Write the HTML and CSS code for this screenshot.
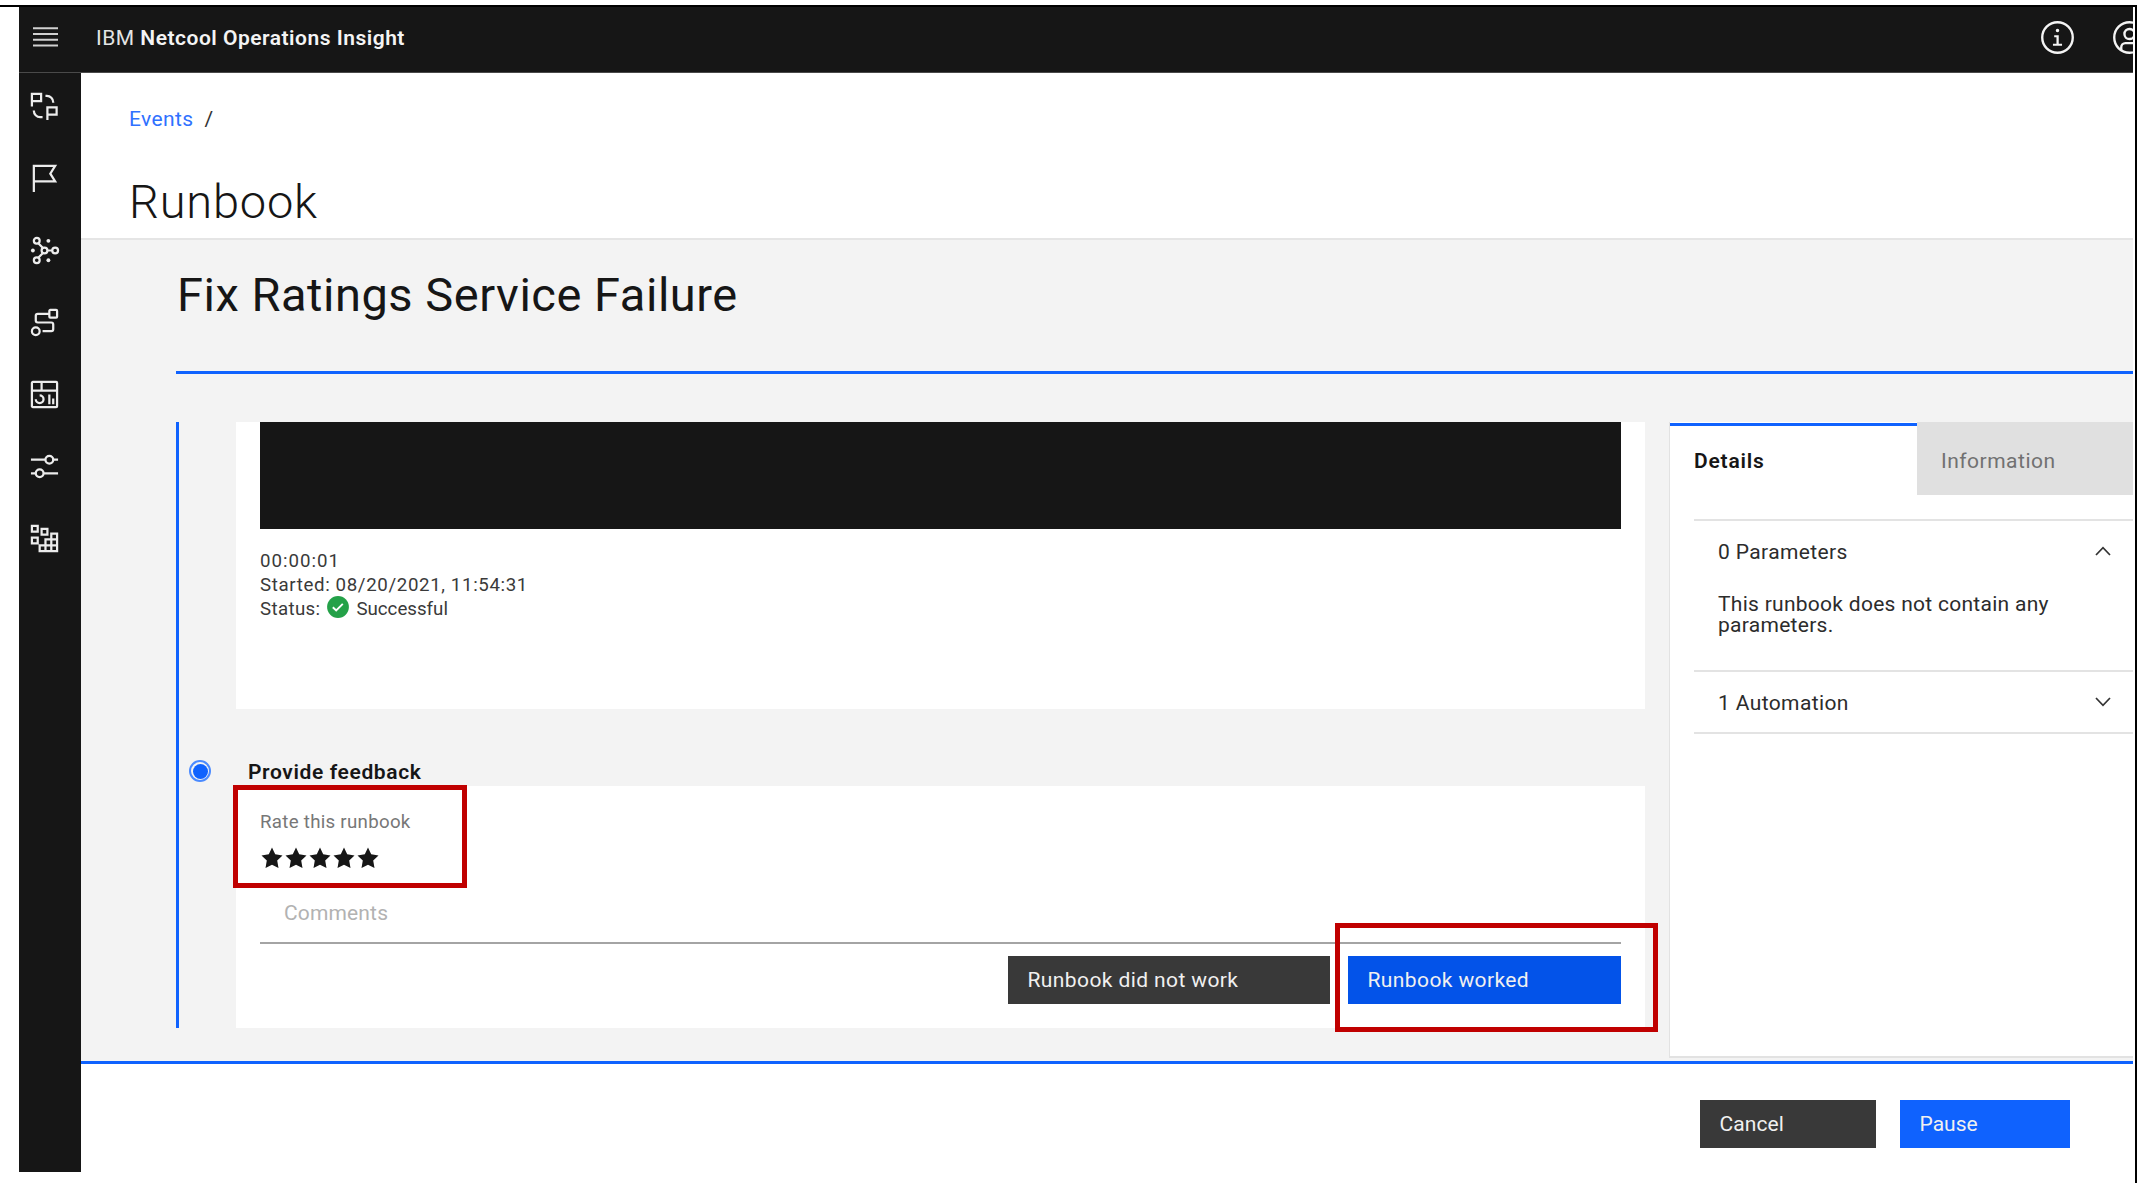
FILE: index.html
```html
<!DOCTYPE html>
<html lang="en">
<head>
<meta charset="utf-8">
<title>IBM Netcool Operations Insight - Runbook</title>
<link rel="stylesheet" href="styles.css">
</head>
<body>
<div class="frame">
<div class="app">
  <header class="topbar">
    <svg class="icon-menu" viewBox="0 0 25 20" fill="none" stroke="currentColor" stroke-width="2"><path d="M0 1.3h25M0 7h25M0 12.7h25M0 18.4h25"/></svg>
    <div class="product">IBM <b>Netcool Operations Insight</b></div>
    <div class="actions">
      <svg class="icon-top" viewBox="0 0 32 32"><circle cx="16" cy="16" r="14.8" fill="none" stroke="currentColor" stroke-width="2.3"/><path fill="currentColor" d="M17.200 22v-8.200h-4.400v2h2.200v6.200h-3.400v2h8.800v-2zM16 7.400a1.700 1.700 0 1 0 0 3.400 1.700 1.700 0 0 0 0-3.400z"/></svg>
      <svg class="icon-top" viewBox="0 0 32 32" fill="none" stroke="currentColor" stroke-width="2.3"><circle cx="16" cy="16" r="14.8"/><circle cx="16" cy="12.6" r="4.9"/><path d="M8 28v-2.600a4 4 0 0 1 4-4h8a4 4 0 0 1 4 4V28"/></svg>
    </div>
  </header>
  <div class="body">
    <nav class="rail">
      <svg viewBox="0 0 32 32"><path d="M3 16V3h9.500v7.500H3M19 30V17h9.500v7.500H19M17 5h1.500A6.500 6.500 0 0 1 25 11.500v.5M5 20v.5A6.500 6.500 0 0 0 11.500 27H14"/></svg>
      <svg viewBox="0 0 32 32"><path d="M5 30V3h22l-5 8 5 8H5"/></svg>
      <svg viewBox="0 0 32 32"><circle cx="8" cy="6" r="3"/><circle cx="8" cy="26" r="3"/><circle cx="27" cy="16" r="3"/><circle cx="16" cy="16" r="3"/><path d="M19 16h5M9.600 8.500l4.800 5M9.600 23.500l4.800-5"/><g class="dots"><circle cx="4" cy="16" r="2"/><circle cx="20" cy="6" r="2"/><circle cx="20" cy="26" r="2"/></g></svg>
      <svg viewBox="0 0 32 32"><rect x="21" y="3" width="8" height="8" rx="1"/><circle cx="7" cy="25" r="4"/><path d="M21 7H9a2 2 0 0 0-2 2v5a2 2 0 0 0 2 2h14a2 2 0 0 1 2 2v5a2 2 0 0 1-2 2h-9"/></svg>
      <svg viewBox="0 0 32 32"><rect x="3" y="3" width="26" height="26" rx="1"/><path d="M3 12h26M13 3v9M11 17a4 4 0 1 1-4 4M21 16v10M25 20v6"/></svg>
      <svg viewBox="0 0 32 32"><path d="M2 9h15M25 9h5M2 23h5M15 23h15"/><circle cx="21" cy="9" r="4"/><circle cx="11" cy="23" r="4"/></svg>
      <svg viewBox="0 0 32 32"><path d="M3 3h6v6H3zM13 6h6v6h-6zM3 15h6v6H3zM23 11h6v18H11v-6h6v-6h6zM17 23v6M23 17v12M23 17h6M17 23h12"/></svg>
    </nav>
    <main class="main">
      <div class="page-head">
        <div class="crumbs"><a>Events</a><span>/</span></div>
        <h1>Runbook</h1>
      </div>
      <section class="runbook">
        <h2>Fix Ratings Service Failure</h2>
        <div class="columns">
          <div class="steps">
            <div class="card result">
              <div class="console"></div>
              <div class="meta">
                <div class="time">00:00:01</div>
                <div class="started">Started: 08/20/2021, 11:54:31</div>
                <div class="status">Status: <svg viewBox="0 0 22 22"><circle cx="11" cy="11" r="10.900" fill="#24a148"/><path d="M5.800 11.200l3.400 3.300 6.600-6.700" fill="none" stroke="#fff" stroke-width="1.900"/></svg><span>Successful</span></div>
              </div>
            </div>
            <div class="step-head"><i class="radio"></i><h3>Provide feedback</h3></div>
            <div class="card feedback">
              <div class="rate">Rate this runbook</div>
              <div class="stars">
                <svg viewBox="0 0 24 24"><path d="M12 1.500l3.200 6.800 7.300 1.100-5.300 5.100 1.300 7.500L12 18.800 5.500 22l1.300-7.500L1.500 9.400l7.300-1.100z"/></svg>
                <svg viewBox="0 0 24 24"><path d="M12 1.500l3.200 6.800 7.300 1.100-5.300 5.100 1.300 7.500L12 18.800 5.500 22l1.300-7.500L1.500 9.400l7.300-1.100z"/></svg>
                <svg viewBox="0 0 24 24"><path d="M12 1.500l3.200 6.800 7.300 1.100-5.300 5.100 1.300 7.500L12 18.800 5.500 22l1.300-7.500L1.500 9.400l7.300-1.100z"/></svg>
                <svg viewBox="0 0 24 24"><path d="M12 1.500l3.200 6.800 7.300 1.100-5.300 5.100 1.300 7.500L12 18.800 5.500 22l1.300-7.500L1.500 9.400l7.300-1.100z"/></svg>
                <svg viewBox="0 0 24 24"><path d="M12 1.500l3.200 6.800 7.300 1.100-5.300 5.100 1.300 7.500L12 18.800 5.500 22l1.300-7.500L1.500 9.400l7.300-1.100z"/></svg>
              </div>
              <div class="comments">Comments</div>
              <div class="verdict">
                <button class="btn dark">Runbook did not work</button>
                <button class="btn pressed">Runbook worked</button>
              </div>
              <div class="mark mark-rate"></div>
              <div class="mark mark-worked"></div>
            </div>
          </div>
          <aside class="side">
            <div class="tabs"><div class="tab on">Details</div><div class="tab">Information</div></div>
            <div class="acc">
              <div class="acc-item open">
                <div class="acc-head"><span>0 Parameters</span><svg viewBox="0 0 16 10"><path d="M1 9l7-7.300L15 9"/></svg></div>
                <p>This runbook does not contain any<br>parameters.</p>
              </div>
              <div class="acc-item">
                <div class="acc-head"><span>1 Automation</span><svg viewBox="0 0 16 10"><path d="M1 1l7 7.300L15 1"/></svg></div>
              </div>
            </div>
          </aside>
        </div>
      </section>
      <footer class="foot">
        <button class="btn dark cancel">Cancel</button>
        <button class="btn blue pause">Pause</button>
      </footer>
    </main>
  </div>
</div>
</div>
</body>
</html>
```
FILE: styles.css
```css
* { box-sizing: border-box; }
body {
  margin: 0;
  width: 2156px;
  height: 1183px;
  overflow: hidden;
  padding-top: 5px;
  background: #fff;
  color: #161616;
  font: 400 21px/24px Roboto, "Noto Sans", sans-serif;
  letter-spacing: .32px;
}
svg { display: block; flex: none; }
h1, h2, h3, p { margin: 0; }

.frame {
  width: 2137px;
  height: 1178px;
  padding: 0 2px 0 19px;
  border: solid #000;
  border-width: 2px 2px 0 0;
}
.app { height: 1165px; overflow: hidden; display: flex; flex-direction: column; }

.topbar {
  flex: none;
  height: 66px;
  display: flex;
  align-items: center;
  padding: 0 0 5px 14px;
  background: #161616;
  border-bottom: 1px solid #4a4a4a;
  color: #f4f4f4;
}
.icon-menu { width: 25px; height: 20px; color: #d0d0d0; }
.product { margin-left: 38px; padding-top: 1px; white-space: pre; letter-spacing: .5px; color: #e4e4e4; }
.product b { font-weight: 600; color: #f4f4f4; }
.actions { margin-left: auto; margin-right: -13px; display: flex; gap: 39px; }
.icon-top { width: 33px; height: 33px; }

.body { flex: 1; display: flex; min-height: 0; }
.rail {
  flex: none;
  width: 62px;
  background: #161616;
  padding: 18px 0 0 10px;
  display: flex;
  flex-direction: column;
  gap: 41px;
}
.rail svg { width: 31px; height: 31px; fill: none; stroke: #ececec; stroke-width: 2.300; }
.rail .dots { fill: #ececec; stroke: none; }

.main { flex: 1; min-width: 0; display: flex; flex-direction: column; }
.page-head { flex: none; height: 167px; padding: 34px 0 0 48px; border-bottom: 2px solid #e5e5e5; }
.crumbs { display: flex; gap: 11px; color: #333; line-height: 24px; }
.crumbs a { color: #2f71ff; letter-spacing: .4px; }
.page-head h1 { margin-top: 43px; font-size: 47px; line-height: 56px; font-weight: 300; letter-spacing: .8px; }

.runbook { flex: none; height: 821px; padding: 27px 0 0 95px; background: #f3f3f3; }
.runbook h2 {
  height: 107px;
  padding: 0 0 0 1px;
  font-size: 47px;
  line-height: 56px;
  font-weight: 400;
  letter-spacing: .53px;
  border-bottom: 3px solid #0f62fe;
}
.columns { display: flex; margin-top: 48px; }
.steps { flex: none; width: 1469px; height: 606px; border-left: 3px solid #0f62fe; }
.card { margin-left: 57px; background: #fff; }
.result { height: 287px; padding: 0 24px; }
.console { height: 107px; background: #161616; }
.meta { padding-top: 20px; font-size: 18.700px; line-height: 24px; color: #3a3a3a; }
.time { letter-spacing: 1px; }
.started { letter-spacing: .63px; }
.status { display: flex; letter-spacing: .35px; }
.status svg { width: 22px; height: 22px; margin: -1px 7px 0 7px; }
.status span { letter-spacing: 0; }
.step-head { display: flex; height: 77px; padding: 51px 0 0 10px; }
.radio { width: 22px; height: 22px; border: 2px solid #4a8aff; border-radius: 50%; background: #0f62fe; background-clip: content-box; padding: 1.500px; }
.step-head h3 { margin: 0 0 0 37px; font-size: 21px; line-height: 24px; font-weight: 600; letter-spacing: .62px; }

.feedback { position: relative; height: 242px; padding: 24px 24px 0; }
.rate { font-size: 18.700px; color: #777; letter-spacing: .28px; }
.stars { display: flex; margin: 12px 0 0; }
.stars svg { width: 24px; height: 24px; fill: #161616; }
.comments { margin-top: 14px; height: 60px; padding: 17px 0 0 24px; color: #b2b2b2; letter-spacing: .15px; border-bottom: 2px solid #a4a4a4; }
.verdict { display: flex; justify-content: flex-end; gap: 18px; margin-top: 12px; }
.btn { height: 48px; border: 0; padding: 0 0 0 19.500px; text-align: left; font: inherit; letter-spacing: .4px; color: #f0f0f0; }
.dark { width: 322px; background: #393939; }
.pressed { width: 273px; background: #0353e9; }
.blue { background: #0f62fe; }
.mark { position: absolute; border: 5px solid #c00000; }
.mark-rate { left: -3px; top: -1px; width: 234px; height: 103px; }
.mark-worked { right: -13px; top: 137px; width: 323px; height: 109px; }

.side { flex: 1; margin: 0 0 0 24px; height: 635.500px; background: #fff; border: 2px solid #e2e2e2; border-width: 0 0 2px 1px; }
.tabs { display: flex; height: 73px; }
.tab { flex: 1; background: #e0e0e0; color: #717171; padding: 27px 0 0 24px; letter-spacing: .5px; }
.tab.on { flex: none; width: 247px; margin-top: 1px; background: #fff; color: #161616; font-weight: 600; letter-spacing: .8px; border-top: 3px solid #0f62fe; padding-top: 23px; }
.acc { margin: 24px 0 0 24px; border-top: 2px solid #e3e3e3; color: #2c2c2c; }
.acc-item { height: 62px; border-bottom: 2px solid #e3e3e3; padding: 19px 22px 0 24px; }
.acc-item.open { height: 151px; padding-top: 18.500px; }
.acc-head { display: flex; justify-content: space-between; align-items: center; letter-spacing: .38px; }
.acc-head svg { width: 16px; height: 10px; margin-top: -2px; fill: none; stroke: #333; stroke-width: 1.700; }
.acc-item p { margin-top: 30px; line-height: 21.300px; letter-spacing: .28px; }

.foot { flex: 1; border-top: 3px solid #0f62fe; display: flex; padding: 36px 0 0 1619px; gap: 24px; }
.cancel { width: 176px; letter-spacing: .1px; }
.pause { width: 170px; letter-spacing: 0; }
```
